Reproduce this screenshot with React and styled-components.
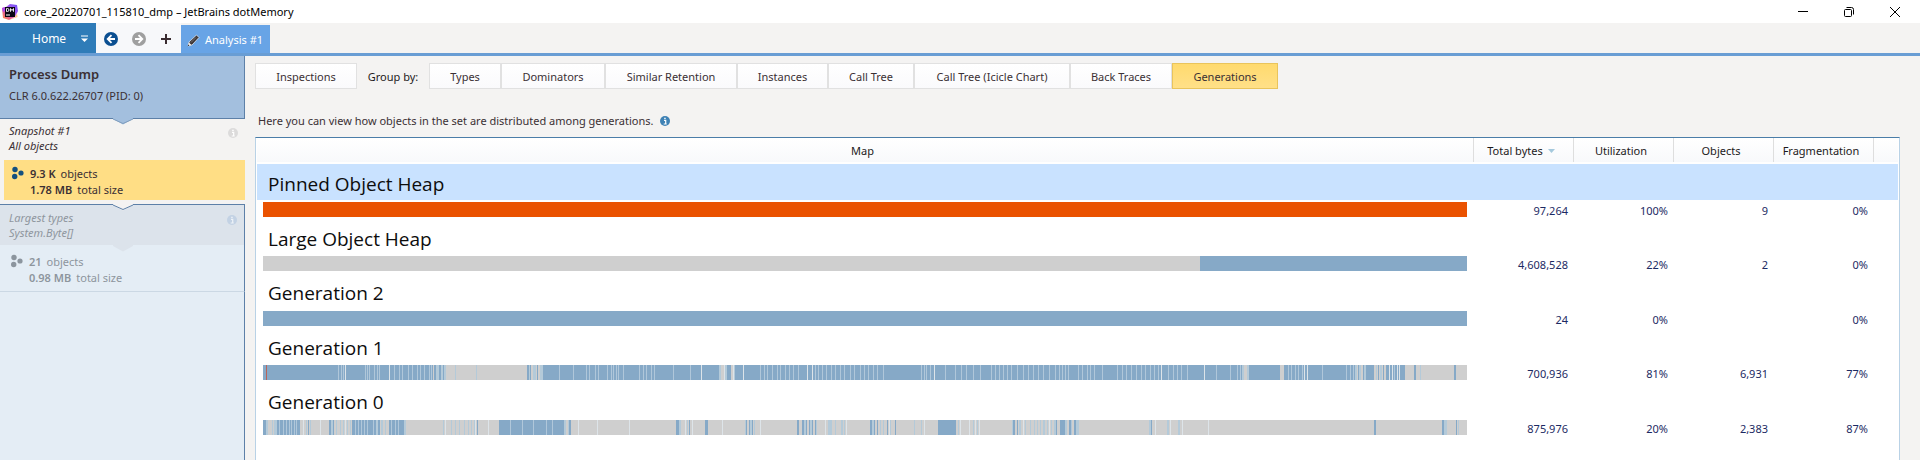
import React from "react";
import styled, { createGlobalStyle, css } from "styled-components";

const blue = "#86a9c7";
const gray = "#cfcfcf";

const GlobalStyle = createGlobalStyle`
  * { box-sizing: border-box; }
  body {
    margin: 0;
    background: #f4f3f2;
    color: #3b3034;
    font: 11px/16px "Noto Sans", "Open Sans", sans-serif;
  }
  button { font: inherit; color: inherit; margin: 0; padding: 0; border: 0; background: none; }
  svg { display: block; flex: none; }
`;

const Window = styled.div`
  display: flex;
  flex-direction: column;
  min-height: 100vh;
`;

const TitleBar = styled.header`
  display: flex;
  align-items: center;
  gap: 6px;
  height: 23px;
  padding: 0 14px 0 2px;
  background: #fff;
  color: #000;
`;

const Title = styled.h1`
  flex: 1;
  margin: 0;
  padding-top: 1px;
  font-size: 11px;
  font-weight: 400;
`;

const WindowControls = styled.div`
  display: flex;
  gap: 24px;
`;

const ControlButton = styled.button`
  display: grid;
  place-items: center;
  width: 22px;
  height: 20px;
`;

const Toolbar = styled.nav`
  display: flex;
  align-items: flex-end;
  height: 33px;
  border-bottom: 3px solid #699dd4;
`;

const HomeButton = styled.button`
  display: flex;
  align-items: center;
  justify-content: space-between;
  width: 96px;
  height: 30px;
  padding: 2px 8px 0 32px;
  background: #2f7cb8;
  color: #fff;
  font-size: 12px;
`;

const History = styled.div`
  display: flex;
  align-items: center;
  gap: 14px;
  width: 85px;
  height: 30px;
  padding: 2px 0 0 8px;
  background: #f7f8fa;
`;

const AnalysisTab = styled.button`
  display: flex;
  align-items: center;
  gap: 5px;
  width: 89px;
  height: 28px;
  padding: 2px 6px 0;
  background: #68a4e6;
  color: #fff;
  white-space: nowrap;
`;

const Body = styled.div`
  display: flex;
  flex: 1;
`;

const Sidebar = styled.aside`
  display: flex;
  flex-direction: column;
  flex: none;
  width: 245px;
`;

const Section = styled.section`
  position: relative;
  border: 0 solid #5d80a8;
`;

const ProcessHeader = styled(Section)`
  height: 63px;
  padding: 8px 9px;
  border-width: 0 1px 1px 0;
  background: #a3bfde;
`;

const ProcessName = styled.h2`
  margin: 0 0 4px;
  font-size: 13px;
  line-height: 20px;
  font-weight: 600;
`;

const SnapshotHeader = styled(Section)`
  display: flex;
  justify-content: space-between;
  height: 41px;
  padding: 4px 7px 0 9px;
  font-size: 11px;
  line-height: 15px;
  font-style: italic;
  ${(p) =>
    p.$muted &&
    css`
      height: 41px;
      margin-top: 4px;
      padding-top: 5px;
      border-width: 1px 1px 0 0;
      background: #dce3eb;
      color: #8f969e;
    `}
`;

const SnapshotInfo = styled.div`
  padding-top: 5px;
`;

const ObjectStats = styled.div`
  display: flex;
  gap: 6px;
  height: 40px;
  margin-left: 4px;
  padding: 6px 0 0 8px;
  background: #ffde85;
  ${(p) =>
    p.$muted &&
    css`
      height: 47px;
      margin-left: 0;
      padding: 9px 0 0 11px;
      border-right: 1px solid #5d80a8;
      border-bottom: 1px solid #cbd8e4;
      background: #e4edf5;
      color: #8d959d;
    `}
`;

const StatLine = styled.div`
  b { font-weight: 600; margin-right: 5px; }
`;

const SidebarFill = styled.div`
  flex: 1;
  border-right: 1px solid #5d80a8;
  background: #e4edf5;
`;

const NotchShape = styled.svg`
  position: absolute;
  left: 113px;
  top: ${(p) => p.$top};
  z-index: 1;
`;

const Main = styled.main`
  display: flex;
  flex-direction: column;
  flex: 1;
  min-width: 0;
  padding: 7px 20px 0 10px;
`;

const ViewBar = styled.div`
  display: flex;
  align-items: center;
`;

const ViewButton = styled.button`
  width: ${(p) => p.$width}px;
  height: 26px;
  padding-top: 1px;
  border: 1px solid #e1e1e1;
  background: linear-gradient(#fff, #fafafc);
  white-space: nowrap;
  ${(p) =>
    p.$active &&
    css`
      border-color: #e9c45c;
      background: linear-gradient(#ffda6e, #ffe088);
    `}
`;

const GroupLabel = styled.span`
  width: 72px;
  padding-top: 1px;
  text-align: center;
  color: #1c1a1b;
`;

const Hint = styled.p`
  display: flex;
  align-items: center;
  gap: 6px;
  margin: 24px 0 8px;
  padding-left: 3px;
`;

const Panel = styled.div`
  flex: 1;
  padding: 0 1px;
  border: 1px solid #b9d2e6;
  border-top-color: #4a7da8;
  border-bottom: 0;
  background: #fff;
`;

const HeapTable = styled.table`
  width: 100%;
  table-layout: fixed;
  border-collapse: separate;
  border-spacing: 0;
`;

const HeaderCell = styled.th`
  height: 24px;
  width: ${(p) => p.$width || "auto"};
  padding: 2px 5px 0 0;
  border-right: ${(p) => (p.$last ? 0 : "1px solid #dedede")};
  background: linear-gradient(#fff, #f8f9fb);
  color: #1c1a1b;
  font-weight: 400;
`;

const SortButton = styled.button`
  display: inline-flex;
  align-items: center;
  gap: 5px;
`;

const HeaderGap = styled.tbody`
  td { height: 2px; padding: 0; }
`;

const Heap = styled.tbody`
  &:nth-of-type(odd) th { height: 37px; }
`;

const HeapName = styled.th`
  height: 38px;
  padding: 4px 11px 0;
  background: ${(p) => (p.$selected ? "#c9e2ff" : "transparent")};
  background-clip: padding-box;
  border-bottom: 2px solid #fff;
  color: #0d0d0d;
  font-family: "Open Sans", "Noto Sans", sans-serif;
  font-size: 19px;
  line-height: 24px;
  font-weight: 400;
  text-align: left;
`;

const MapCell = styled.td`
  height: 17px;
  padding: 0 7px 2px 6px;
`;

const HeapMap = styled.svg`
  width: 100%;
  height: 15px;
`;

const Value = styled.td`
  height: 17px;
  padding: 0 6px 0 0;
  color: #1c2a63;
  line-height: 16px;
  text-align: right;
`;

/* Positions along a heap map that is 1204 units long.
   used: occupied ranges; faint: half-filled ranges; gaps: thin free slots; wide: clear free slots */
const heaps = [
  {
    name: "Pinned Object Heap",
    values: ["97,264", "100%", "9", "0%"],
    pinned: [[0, 1204]],
    selected: true,
  },
  {
    name: "Large Object Heap",
    values: ["4,608,528", "22%", "2", "0%"],
    used: [[937, 1204]],
  },
  {
    name: "Generation 2",
    values: ["24", "0%", "", "0%"],
    used: [[0, 1204]],
  },
  {
    name: "Generation 1",
    values: ["700,936", "81%", "6,931", "77%"],
    pinned: [[3, 4]],
    used: [
      [0, 3], [4, 170], [171, 173], [176, 178], [180, 181], [264, 266], [267, 268], [274, 275],
      [280, 456], [464, 468], [472, 979], [986, 1017], [1021, 1092], [1095, 1096], [1100, 1101],
      [1103, 1111], [1115, 1116], [1120, 1121], [1123, 1142], [1151, 1153], [1191, 1193],
    ],
    faint: [
      [173, 176], [178, 180], [181, 183], [192, 193], [213, 214], [266, 267], [270, 273], [277, 280],
      [456, 458], [462, 464], [470, 472], [979, 981], [984, 986], [1092, 1094], [1096, 1098],
      [1101, 1103], [1113, 1114], [1117, 1119], [1157, 1158],
    ],
    gaps: [
      75, 78, 80, 102, 104, 106, 111, 114, 116, 131, 136, 139, 145, 149, 154, 157, 161, 166, 168,
      296, 310, 323, 326, 332, 335, 344, 348, 350, 353, 355, 360, 376, 380, 383, 388, 391, 410, 427,
      497, 501, 504, 509, 514, 517, 522, 526, 530, 535, 552, 555, 559, 563, 568, 572, 577, 581, 587,
      591, 597, 601, 605, 610, 614, 620, 658, 661, 663, 667, 682, 692, 698, 703, 710, 717, 728, 732,
      736, 740, 744, 748, 754, 760, 765, 770, 775, 780, 786, 792, 796, 799, 802, 805, 815, 819, 824,
      827, 831, 839, 854, 859, 863, 868, 873, 878, 882, 887, 891, 895, 905, 910, 914, 918, 924,
      953, 967, 974, 977, 1025, 1028, 1032, 1035, 1039, 1059, 1083, 1087, 1090, 1131,
    ],
    wide: [82, 126, 438, 461, 470, 480, 544, 549, 671, 898, 941, 1041, 1044, 1126, 1129, 1134, 1136],
  },
  {
    name: "Generation 0",
    values: ["875,976", "20%", "2,383", "87%"],
    used: [
      [0, 3], [14, 37], [45, 46], [66, 68], [70, 71], [89, 113], [115, 117], [126, 141], [214, 215],
      [236, 301], [306, 308], [413, 416], [426, 427], [442, 445], [483, 484], [486, 487], [489, 490],
      [534, 536], [539, 541], [543, 544], [546, 547], [549, 550], [552, 553], [607, 609], [611, 612],
      [614, 615], [624, 625], [632, 633], [675, 693], [750, 752], [754, 755], [793, 794], [797, 802],
      [806, 809], [811, 813], [888, 889], [1111, 1113], [1179, 1181], [1193, 1194],
    ],
    faint: [
      [3, 5], [9, 10], [11, 14], [43, 44], [47, 48], [68, 70], [73, 74], [77, 78], [80, 81], [84, 85],
      [87, 88], [113, 115], [118, 120], [122, 123], [141, 143], [180, 181], [188, 189], [192, 193],
      [196, 197], [201, 202], [205, 206], [208, 209], [211, 212], [301, 303], [305, 306], [416, 418],
      [424, 425], [482, 483], [487, 489], [491, 492], [541, 543], [547, 549], [553, 554], [565, 569],
      [572, 573], [578, 580], [581, 582], [609, 611], [617, 618], [620, 621], [627, 628], [651, 652],
      [658, 659], [695, 696], [710, 711], [714, 715], [749, 750], [756, 758], [762, 763], [767, 768],
      [771, 772], [774, 775], [777, 778], [780, 782], [784, 785], [788, 789], [791, 793], [802, 804],
      [813, 816], [886, 888], [904, 906], [915, 917], [1181, 1184], [1195, 1196],
    ],
    gaps: [
      16, 20, 23, 26, 28, 31, 33, 92, 95, 98, 101, 104, 110, 128, 132, 135, 247, 259, 270, 283, 289,
      808,
    ],
    wide: [
      40, 57, 82, 182, 212, 225, 315, 334, 366, 422, 429, 459, 497, 562, 583, 626, 661, 697, 706,
      712, 716, 760, 786, 892, 907, 919, 945,
    ],
  },
];

const views = [
  { label: "Types", width: 72 },
  { label: "Dominators", width: 104 },
  { label: "Similar Retention", width: 132 },
  { label: "Instances", width: 91 },
  { label: "Call Tree", width: 86 },
  { label: "Call Tree (Icicle Chart)", width: 156 },
  { label: "Back Traces", width: 102 },
  { label: "Generations", width: 106, active: true },
];

const Ranges = ({ items = [], fill }) =>
  items.map(([a, b]) => <rect key={a} x={a} width={b - a} height="15" fill={fill} />);

const Slots = ({ items = [], fill }) =>
  items.map((a) => <rect key={a} x={a} width="1" height="15" fill={fill} />);

const Map = ({ heap }) => (
  <HeapMap viewBox="0 0 1204 15" preserveAspectRatio="none" role="img" aria-label={heap.name + " map"}>
    <rect width="1204" height="15" fill={gray} />
    <Ranges items={heap.used} fill={blue} />
    <Ranges items={heap.faint} fill="#b4cad9" />
    <Ranges items={heap.pinned} fill={heap.selected ? "#ea5200" : "#b8645a"} />
    <Slots items={heap.gaps} fill="#b0c7da" />
    <Slots items={heap.wide} fill="#dde4e9" />
  </HeapMap>
);

const Logo = () => (
  <svg width="16" height="16" viewBox="0 0 16 16" aria-hidden="true">
    <defs>
      <linearGradient id="logo" x1="0" y1="1" x2="1" y2="0">
        <stop offset="0" stopColor="#ff9a3c" />
        <stop offset="0.35" stopColor="#e5589a" />
        <stop offset="0.6" stopColor="#a45cf0" />
        <stop offset="1" stopColor="#6a4df5" />
      </linearGradient>
    </defs>
    <path d="M0 4 4 3 8 0l7 1 1 6-3 6-6 3-6-2z" fill="url(#logo)" />
    <path d="M0 4l3-1v4l-2 1z" fill="#b04be8" />
    <path d="M7 16l6-3 2-4 .5 4z" fill="#ffc58a" />
    <rect x="3" y="3" width="10" height="10" fill="#0b0614" />
    <path d="M4.500 4.500v3h1q1.500 0 1.500-1.500t-1.500-1.500zM8.500 7.800V4.500l1.500 2 1.500-2v3.300" fill="none" stroke="#fff" strokeWidth="0.900" />
    <path d="M4 11h4" stroke="#fff" />
  </svg>
);

const ArrowCircle = ({ color, flip }) => (
  <svg width="14" height="14" viewBox="0 0 14 14" aria-hidden="true">
    <circle cx="7" cy="7" r="7" fill={color} />
    <path
      d="M11 7H4M7.500 3.200 3.700 7l3.800 3.800"
      fill="none"
      stroke="#fff"
      strokeWidth="1.800"
      transform={flip ? "rotate(180 7 7)" : undefined}
    />
  </svg>
);

const Pencil = () => (
  <svg width="13" height="13" viewBox="0 0 13 13" aria-hidden="true">
    <path d="M1 12l1-4 7.500-7 2.500 2.500L5 11z" fill="#3a3333" stroke="#d9e6f5" strokeWidth="0.800" />
    <path d="M1 12l1-3.500L4.500 11z" fill="#f3ede6" />
    <path d="M4 8.500 9 3.500" stroke="#8a8686" strokeWidth="0.800" />
    <path d="M.7 12.300l.6-1.700 1 1z" fill="#222" />
  </svg>
);

const InfoIcon = ({ color, ink = "#fff" }) => (
  <svg width="10" height="10" viewBox="0 0 10 10" aria-hidden="true">
    <circle cx="5" cy="5" r="5" fill={color} />
    <path d="M4 4.300h1.700V8M3.700 8h3M4.200 2.300h1.500" fill="none" stroke={ink} strokeWidth="1.200" />
  </svg>
);

const ObjectsIcon = ({ color }) => (
  <svg width="12" height="14" viewBox="0 0 12 14" aria-hidden="true">
    <g fill={color}>
      <circle cx="3" cy="3.500" r="2.700" />
      <circle cx="9" cy="7" r="2.600" />
      <circle cx="2.700" cy="10.500" r="2.700" />
    </g>
  </svg>
);

const Notch = ({ fill, stroke, top = "calc(100% - 1px)" }) => (
  <NotchShape $top={top} width="20" height="7" viewBox="0 0 20 7" aria-hidden="true">
    <path d="M0 0V1L10 6.500 20 1V0z" fill={fill} />
    {stroke && <path d="M0 1.500 10 6 20 1.500" transform="translate(0 -.5)" fill="none" stroke={stroke} />}
  </NotchShape>
);

export default function App() {
  return (
    <Window>
      <GlobalStyle />
      <TitleBar>
        <Logo />
        <Title>core_20220701_115810_dmp – JetBrains dotMemory</Title>
        <WindowControls>
          <ControlButton aria-label="Minimize">
            <svg width="10" height="10" viewBox="0 0 10 10"><path d="M0 4.500h10" stroke="#000" /></svg>
          </ControlButton>
          <ControlButton aria-label="Restore">
            <svg width="10" height="10" viewBox="0 0 10 10" fill="none" stroke="#000">
              <rect x="0.500" y="2.500" width="7" height="7" rx="1" />
              <path d="M2.500.500H7.500a2 2 0 0 1 2 2v5" />
            </svg>
          </ControlButton>
          <ControlButton aria-label="Close">
            <svg width="10" height="10" viewBox="0 0 10 10"><path d="M0 0l10 10M10 0 0 10" stroke="#000" /></svg>
          </ControlButton>
        </WindowControls>
      </TitleBar>

      <Toolbar>
        <HomeButton>
          Home
          <svg width="7" height="8" viewBox="0 0 7 8" aria-hidden="true">
            <path d="M0 1h7" stroke="#fff" />
            <path d="M0 3.500h7L3.500 7z" fill="#fff" />
          </svg>
        </HomeButton>
        <History>
          <button aria-label="Back"><ArrowCircle color="#0b4f91" /></button>
          <button aria-label="Forward"><ArrowCircle color="#9f9f9f" flip /></button>
          <button aria-label="Add">
            <svg width="12" height="12" viewBox="0 0 12 12"><path d="M6 1v10M1 6h10" stroke="#3a2c30" strokeWidth="2" /></svg>
          </button>
        </History>
        <AnalysisTab>
          <Pencil />
          Analysis #1
        </AnalysisTab>
      </Toolbar>

      <Body>
        <Sidebar>
          <ProcessHeader>
            <ProcessName>Process Dump</ProcessName>
            CLR 6.0.622.26707 (PID: 0)
            <Notch top="100%" fill="#a3bfde" stroke="#7f9cbd" />
          </ProcessHeader>
          <SnapshotHeader>
            <div>Snapshot #1<br />All objects</div>
            <SnapshotInfo><InfoIcon color="#dcdbdb" /></SnapshotInfo>
          </SnapshotHeader>
          <ObjectStats>
            <ObjectsIcon color="#14507f" />
            <div>
              <StatLine><b>9.3 K</b>objects</StatLine>
              <StatLine><b>1.78 MB</b>total size</StatLine>
            </div>
          </ObjectStats>
          <SnapshotHeader $muted>
            <div>Largest types<br />System.Byte[]</div>
            <SnapshotInfo><InfoIcon color="#c3d2e4" ink="#eef3f8" /></SnapshotInfo>
            <Notch top="-1px" fill="#f4f3f2" stroke="#5d80a8" />
            <Notch top="100%" fill="#dce3eb" />
          </SnapshotHeader>
          <ObjectStats $muted>
            <ObjectsIcon color="#8c959e" />
            <div>
              <StatLine><b>21</b>objects</StatLine>
              <StatLine><b>0.98 MB</b>total size</StatLine>
            </div>
          </ObjectStats>
          <SidebarFill />
        </Sidebar>

        <Main>
          <ViewBar>
            <ViewButton $width={102}>Inspections</ViewButton>
            <GroupLabel>Group by:</GroupLabel>
            {views.map((v) => (
              <ViewButton key={v.label} $width={v.width} $active={v.active}>{v.label}</ViewButton>
            ))}
          </ViewBar>
          <Hint>
            Here you can view how objects in the set are distributed among generations.
            <InfoIcon color="#3f82b5" />
          </Hint>
          <Panel>
            <HeapTable>
              <thead>
                <tr>
                  <HeaderCell>Map</HeaderCell>
                  <HeaderCell $width="100px">
                    <SortButton>
                      Total bytes
                      <svg width="7" height="4" viewBox="0 0 7 4" aria-hidden="true"><path d="M0 0h7L3.500 4z" fill="#a5c9dd" /></svg>
                    </SortButton>
                  </HeaderCell>
                  <HeaderCell $width="100px">Utilization</HeaderCell>
                  <HeaderCell $width="100px">Objects</HeaderCell>
                  <HeaderCell $width="100px">Fragmentation</HeaderCell>
                  <HeaderCell as="td" $width="24px" $last />
                </tr>
              </thead>
              <HeaderGap><tr><td colSpan={6} /></tr></HeaderGap>
              {heaps.map((heap) => (
                <Heap key={heap.name}>
                  <tr>
                    <HeapName scope="rowgroup" colSpan={6} $selected={heap.selected}>{heap.name}</HeapName>
                  </tr>
                  <tr>
                    <MapCell><Map heap={heap} /></MapCell>
                    {heap.values.map((v, i) => <Value key={i}>{v}</Value>)}
                    <td />
                  </tr>
                </Heap>
              ))}
            </HeapTable>
          </Panel>
        </Main>
      </Body>
    </Window>
  );
}
